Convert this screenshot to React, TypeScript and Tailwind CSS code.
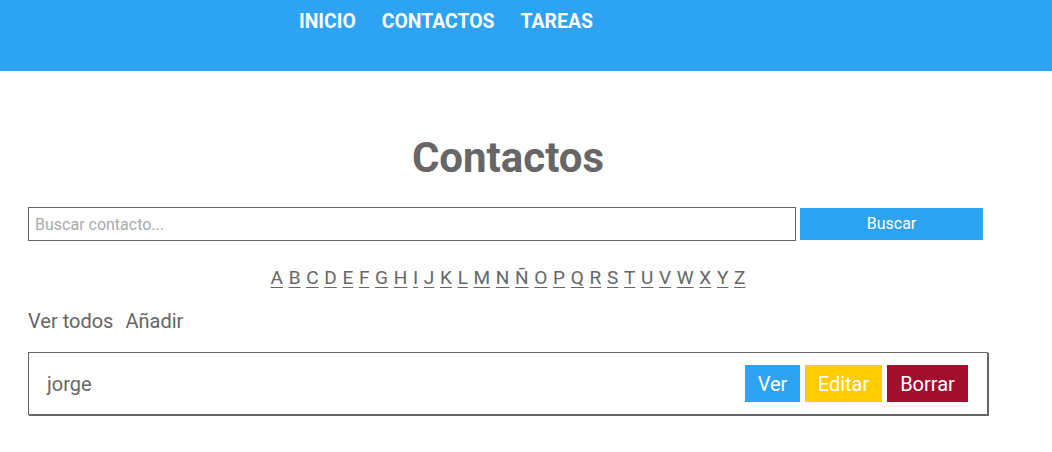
import React from "react";

const letters = "A B C D E F G H I J K L M N Ñ O P Q R S T U V W X Y Z".split(" ");

export default function App() {
  return (
    <div className="min-h-[452px] bg-white text-[#666]" style={{ fontFamily: "Roboto, 'Noto Sans', sans-serif" }}>
      <header className="h-[71px] bg-[#2ea3f2]">
        <nav className="flex gap-[26px] pl-[299px] pt-[9px] text-[19.4px] font-bold text-white leading-[26px]">
          <a>INICIO</a>
          <a>CONTACTOS</a>
          <a>TAREAS</a>
        </nav>
      </header>
      <main className="mx-[28px] w-[960px]">
        <h1 className="mt-[62px] text-center text-[42px] font-bold leading-[50px] text-[#666]">Contactos</h1>
        <div className="mt-[24px] flex items-center gap-[4px]">
          <input
            placeholder="Buscar contacto..."
            className="h-[34px] w-[768px] border border-[#666] px-[6px] text-[16px] text-[#666] outline-none placeholder:text-[#aaa]"
          />
          <button className="h-[32px] w-[183px] bg-[#2ea3f2] text-[16px] text-white">Buscar</button>
        </div>
        <div className="mt-[23px] flex justify-center gap-[5.7px] text-[19px] leading-[28px]">
          {letters.map((l) => (
            <a key={l} className="underline underline-offset-[3px]">{l}</a>
          ))}
        </div>
        <div className="mt-[16px] flex gap-[12px] text-[20px] leading-[26px]">
          <a>Ver todos</a>
          <a>Añadir</a>
        </div>
        <div className="mt-[18px] flex h-[63px] items-center justify-between border border-[#666] pl-[18px] pr-[19px] shadow-[1px_1px_0_#666]">
          <span className="text-[20px]">jorge</span>
          <div className="flex gap-[5px] text-[20px] text-white">
            <button className="h-[37px] w-[55px] bg-[#2ea3f2]">Ver</button>
            <button className="h-[37px] w-[77px] bg-[#ffcc00]">Editar</button>
            <button className="h-[37px] w-[81px] bg-[#a10e2e]">Borrar</button>
          </div>
        </div>
      </main>
    </div>
  );
}
